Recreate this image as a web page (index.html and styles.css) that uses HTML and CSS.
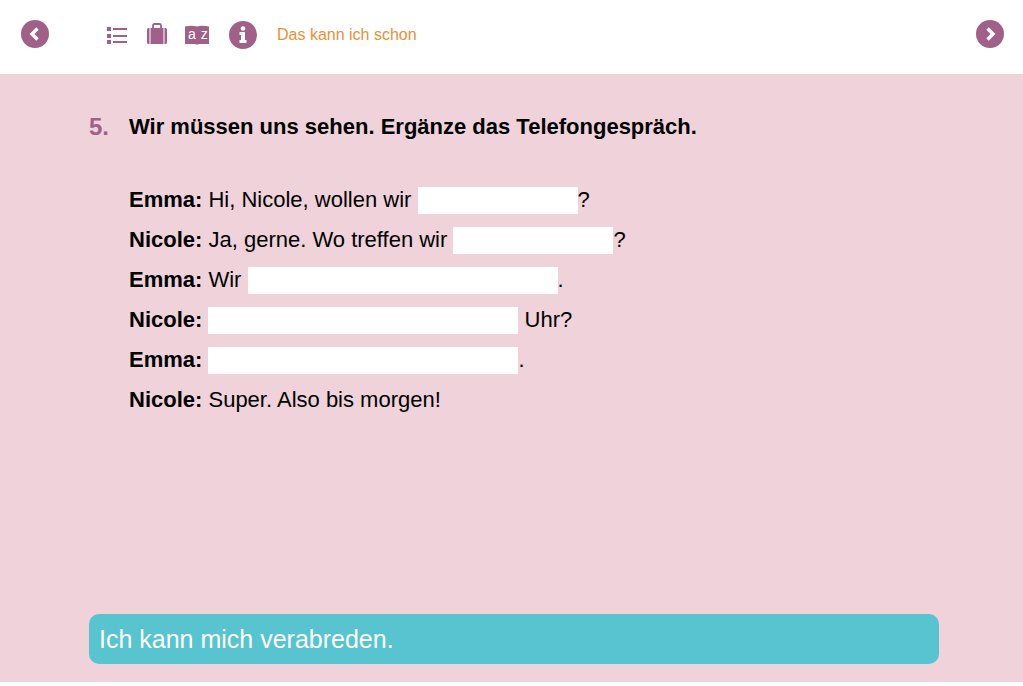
FILE: index.html
```html
<!DOCTYPE html>
<html lang="de">
<head>
  <meta charset="UTF-8" />
  <title>Das kann ich schon</title>
  <link rel="stylesheet" href="styles.css">
</head>
<body>

  <!-- Top navigation -->
  <div class="topbar">
    <svg class="round-btn" width="28" height="28" viewBox="0 0 28 28">
      <circle cx="14" cy="14" r="14" fill="#a06088"/>
      <path d="M16.5 8.5 L11 14 L16.5 19.5" fill="none" stroke="#fff" stroke-width="3.4"/>
    </svg>

    <div class="tools">
      <svg class="tool-list" width="22" height="20" viewBox="0 0 22 20">
        <g fill="#a06088">
          <rect x="1" y="2" width="4" height="4"/>
          <rect x="1" y="9" width="4" height="4"/>
          <rect x="1" y="15" width="4" height="4"/>
          <rect x="7" y="3" width="14" height="2"/>
          <rect x="7" y="10" width="14" height="2"/>
          <rect x="7" y="16" width="14" height="2"/>
        </g>
      </svg>
      <svg class="tool-bag" width="20" height="22" viewBox="0 0 20 22">
        <path d="M6 5 V2.5 Q6 1 7.5 1 H12.5 Q14 1 14 2.5 V5" fill="none" stroke="#a06088" stroke-width="1.8"/>
        <path d="M1.5 5 H2.5 V21 H1.5 Q0 21 0 19.5 V6.5 Q0 5 1.5 5 Z M3.5 5 H16.5 V21 H3.5 Z M17.5 5 H18.5 Q20 5 20 6.5 V19.5 Q20 21 18.5 21 H17.5 Z" fill="#a06088"/>
      </svg>
      <div class="tool-book">
        <svg width="24" height="20" viewBox="0 0 24 20">
          <path d="M0 1.5 Q7 0 12 1.5 Q17 0 24 1.5 V19 H14 Q12 20 10 19 H0 Z" fill="#a06088"/>
        </svg>
        <span class="book-letters">a z</span>
      </div>
      <svg class="tool-info" width="28" height="28" viewBox="0 0 28 28">
        <circle cx="14" cy="14" r="14" fill="#a06088"/>
        <circle cx="14" cy="7.5" r="2.3" fill="#fff"/>
        <path d="M10.5 11 H16 V19 H17.5 V22 H10.5 V19 H12 V14 H10.5 Z" fill="#fff"/>
      </svg>
      <span class="tool-link">Das kann ich schon</span>
    </div>

    <svg class="round-btn" width="28" height="28" viewBox="0 0 28 28">
      <circle cx="14" cy="14" r="14" fill="#a06088"/>
      <path d="M11.5 8.5 L17 14 L11.5 19.5" fill="none" stroke="#fff" stroke-width="3.4"/>
    </svg>
  </div>

  <!-- Exercise -->
  <div class="page">
    <div class="exercise">
      <div class="task">
        <span class="task-nr">5.</span>
        <span class="task-title">Wir müssen uns sehen. Ergänze das Telefongespräch.</span>
      </div>

      <div class="dialog">
        <div class="line"><b>Emma:</b> Hi, Nicole, wollen wir <span class="blank short"></span>?</div>
        <div class="line"><b>Nicole:</b> Ja, gerne. Wo treffen wir <span class="blank short"></span>?</div>
        <div class="line"><b>Emma:</b> Wir <span class="blank long"></span>.</div>
        <div class="line"><b>Nicole:</b> <span class="blank long"></span> Uhr?</div>
        <div class="line"><b>Emma:</b> <span class="blank long"></span>.</div>
        <div class="line"><b>Nicole:</b> Super. Also bis morgen!</div>
      </div>
    </div>

    <div class="goal">Ich kann mich verabreden.</div>
  </div>

</body>
</html>
```

FILE: styles.css
```css
body {
  margin: 0;
  background-color: #fff;
  color: #000;
  font-family: "Liberation Sans", Arial, sans-serif;
}

/* Top navigation */
.topbar {
  height: 74px;
  padding: 0 19px 0 21px;
  display: flex;
  align-items: center;
  justify-content: space-between;
}

.round-btn {
  display: block;
  margin-top: -6px;
}

.tools {
  flex: 1;
  margin-left: 56px;
  margin-bottom: 5px;
  display: flex;
  align-items: center;
}

.tool-list {
  margin-left: 1px;
}

.tool-bag {
  margin-left: 19px;
  margin-top: -1px;
}

.tool-book {
  margin-left: 18px;
  width: 24px;
  height: 20px;
  position: relative;
}

.tool-book svg {
  display: block;
}

.book-letters {
  position: absolute;
  left: 3px;
  top: 1px;
  color: #fff;
  font-size: 14px;
  line-height: 16px;
  letter-spacing: 0.5px;
  white-space: nowrap;
}

.tool-info {
  margin-left: 20px;
}

.tool-link {
  margin-left: 20px;
  font-size: 16px;
  color: #e8913a;
}

/* Exercise */
.page {
  height: 608px;
  box-sizing: border-box;
  background-color: #efd2da;
  padding: 0 84px 18px 89px;
  display: flex;
  flex-direction: column;
  justify-content: space-between;
}

.task {
  padding-top: 40px;
  display: flex;
  line-height: 26px;
  font-weight: bold;
  font-size: 22px;
}

.task-nr {
  width: 40px;
  font-size: 24px;
  color: #a06088;
}

.dialog {
  margin-top: 40px;
  padding-left: 40px;
  font-size: 22px;
}

.line {
  height: 40px;
  line-height: 40px;
}

.blank {
  display: inline-block;
  height: 27px;
  vertical-align: -7px;
  background-color: #fff;
}

.blank.short {
  width: 160px;
}

.blank.long {
  width: 310px;
}

/* Goal banner */
.goal {
  height: 50px;
  line-height: 50px;
  padding: 0 10px;
  border-radius: 10px;
  background-color: #57c4cf;
  color: #fff;
  font-size: 25px;
}
```
